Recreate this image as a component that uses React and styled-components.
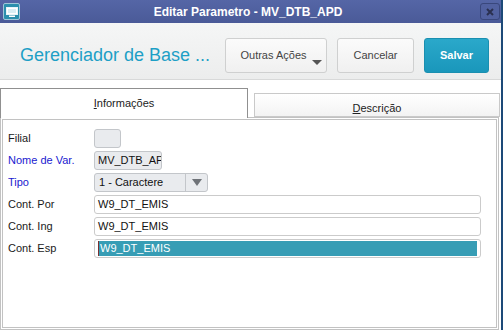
import React from 'react';
import styled, { createGlobalStyle } from 'styled-components';

const GlobalStyle = createGlobalStyle`
  html, body {
    margin: 0;
    padding: 0;
    background: #ffffff;
  }
  body {
    font-family: 'Liberation Sans', Arial, sans-serif;
    font-size: 11px;
  }
`;

const fields = [
  { label: 'Filial', value: '', width: 27, disabled: true },
  { label: 'Nome de Var.', value: 'MV_DTB_APD', width: 68, disabled: true, blue: true },
  { label: 'Tipo', value: '1 - Caractere', width: 114, select: true, blue: true },
  { label: 'Cont. Por', value: 'W9_DT_EMIS', width: 387 },
  { label: 'Cont. Ing', value: 'W9_DT_EMIS', width: 387 },
  { label: 'Cont. Esp', value: 'W9_DT_EMIS', width: 387, selected: true },
];

const App = () => {
  return (
    <>
      <GlobalStyle />
      <Window>
        <TitleBar>
          <AppIcon>
            <svg width="12" height="10" viewBox="0 0 12 10">
              <rect x="0.5" y="0.5" width="11" height="7" fill="#ffffff" stroke="#e8f4f8" />
              <rect x="2" y="2" width="8" height="4" fill="#d9eef4" />
              <rect x="3" y="8.5" width="6" height="1.5" fill="#ffffff" />
            </svg>
          </AppIcon>
          <TitleText>Editar Parametro - MV_DTB_APD</TitleText>
          <CloseButton>
            <svg width="8" height="8" viewBox="0 0 8 8">
              <path d="M1 1 L7 7 M7 1 L1 7" stroke="#2a3050" strokeWidth="2" />
            </svg>
          </CloseButton>
        </TitleBar>

        <Header>
          <PageTitle>Gerenciador de Base ...</PageTitle>
          <Actions>
            <ActionButton width={102}>
              <ButtonLabel shift={-5}>Outras Ações</ButtonLabel>
              <Caret />
            </ActionButton>
            <ActionButton width={77}>
              <ButtonLabel>Cancelar</ButtonLabel>
            </ActionButton>
            <ActionButton width={65} primary>
              <ButtonLabel>Salvar</ButtonLabel>
            </ActionButton>
          </Actions>
        </Header>

        <Body>
          <TabRow>
            <Tab active width={248}>
              <u>I</u>nformações
            </Tab>
            <Tab width={246}>
              <u>D</u>escrição
            </Tab>
          </TabRow>
          <Panel>
            <Form>
              {fields.map(field => (
                <React.Fragment key={field.label}>
                  <Label blue={field.blue}>{field.label}</Label>
                  {field.select ? (
                    <Select width={field.width}>
                      <SelectValue>{field.value}</SelectValue>
                      <SelectArrow />
                    </Select>
                  ) : (
                    <Input width={field.width} disabled={field.disabled}>
                      {field.selected ? (
                        <Selection>{field.value}</Selection>
                      ) : (
                        field.value
                      )}
                    </Input>
                  )}
                </React.Fragment>
              ))}
            </Form>
          </Panel>
        </Body>
      </Window>
    </>
  );
};

const Window = styled.div`
  width: 503px;
  height: 330px;
  box-sizing: border-box;
  border-right: 2px solid #1d4a78;
  display: flex;
  flex-direction: column;
  background: #ffffff;
  overflow: hidden;
`;

const TitleBar = styled.div`
  height: 23px;
  flex-shrink: 0;
  display: flex;
  align-items: center;
  padding: 0 2px 0 3px;
  margin-right: -2px;
  background: linear-gradient(#5566a6, #4a5a98);
`;

const AppIcon = styled.div`
  width: 17px;
  height: 17px;
  box-sizing: border-box;
  border: 1px solid #9fc6d8;
  border-radius: 2px;
  background: #2b8fad;
  display: flex;
  align-items: center;
  justify-content: center;
`;

const TitleText = styled.div`
  flex: 1;
  text-align: center;
  color: #ffffff;
  font-family: 'Liberation Sans', Arial, sans-serif;
  font-weight: bold;
  font-size: 12px;
  margin-left: -4px;
`;

const CloseButton = styled.div`
  width: 20px;
  height: 17px;
  box-sizing: border-box;
  border: 1px solid #39477c;
  border-radius: 3px;
  background: #5161a0;
  display: flex;
  align-items: center;
  justify-content: center;
  margin-right: 1px;
`;

const Header = styled.div`
  height: 57px;
  flex-shrink: 0;
  box-sizing: border-box;
  display: flex;
  align-items: flex-start;
  justify-content: space-between;
  padding: 15px 12px 0 20px;
  background: linear-gradient(#f5f6f6, #eceded);
  border-bottom: 1px solid #d8d9d9;
`;

const PageTitle = styled.div`
  color: #1d9fc6;
  font-size: 18px;
  line-height: 35px;
  font-family: 'Liberation Sans', Arial, sans-serif;
`;

const Actions = styled.div`
  display: flex;
  gap: 10px;
`;

const ActionButton = styled.div`
  position: relative;
  width: ${p => p.width}px;
  height: 35px;
  box-sizing: border-box;
  border-radius: 3px;
  display: flex;
  align-items: center;
  justify-content: center;
  font-size: 11px;
  border: 1px solid ${p => (p.primary ? '#1a8fb0' : '#cfd0d0')};
  background: ${p =>
    p.primary
      ? 'linear-gradient(#2aa8ca, #1a97bb)'
      : 'linear-gradient(#fbfbfb, #f0f0f0)'};
  color: ${p => (p.primary ? '#ffffff' : '#444444')};
  font-weight: ${p => (p.primary ? 'bold' : 'normal')};
`;

const ButtonLabel = styled.span`
  margin-left: ${p => p.shift || 0}px;
  margin-top: -2px;
`;

const Caret = styled.span`
  position: absolute;
  right: 4px;
  bottom: 7px;
  border-left: 5px solid transparent;
  border-right: 5px solid transparent;
  border-top: 5px solid #555555;
`;

const Body = styled.div`
  flex: 1;
  display: flex;
  flex-direction: column;
  padding-top: 8px;
  min-height: 0;
`;

const TabRow = styled.div`
  height: 29px;
  flex-shrink: 0;
  display: flex;
  align-items: flex-end;
  gap: 6px;
`;

const Tab = styled.div`
  width: ${p => p.width}px;
  height: ${p => (p.active ? 30 : 24)}px;
  box-sizing: border-box;
  display: flex;
  align-items: center;
  justify-content: center;
  font-size: 11px;
  color: #222222;
  margin-bottom: ${p => (p.active ? -1 : 0)}px;
  border: 1px solid ${p => (p.active ? '#909090' : '#c9c9c9')};
  border-bottom: ${p => (p.active ? 'none' : '1px solid #c9c9c9')};
  background: ${p =>
    p.active ? '#ffffff' : 'linear-gradient(#ffffff, #f3f3f3)'};
  position: relative;
  z-index: ${p => (p.active ? 1 : 0)};
  padding-top: ${p => (p.active ? 0 : 6)}px;
  padding-bottom: ${p => (p.active ? 1 : 0)}px;
`;

const Panel = styled.div`
  flex: 1;
  margin-right: 2px;
  border: 3px double #c2c2c2;
  background: #ffffff;
  min-height: 0;
`;

const Form = styled.div`
  display: grid;
  grid-template-columns: 86px auto;
  justify-content: start;
  align-items: center;
  row-gap: 3px;
  padding: 9px 0 0 5px;
`;

const Label = styled.div`
  font-size: 11px;
  color: ${p => (p.blue ? '#2020d0' : '#1a1a1a')};
  line-height: 19px;
`;

const Input = styled.div`
  width: ${p => p.width}px;
  height: 19px;
  box-sizing: border-box;
  border: 1px solid ${p => (p.disabled ? '#c3c6ca' : '#cbcbcb')};
  border-radius: 3px;
  background: ${p => (p.disabled ? '#e9ebee' : '#ffffff')};
  padding: 1px 3px;
  font-size: 11px;
  line-height: 15px;
  color: #111111;
  overflow: hidden;
  white-space: nowrap;
  display: flex;
`;

const Selection = styled.div`
  flex: 1;
  background: #379db5;
  color: #ffffff;
  padding-left: 1px;
  border-left: 1px solid #7a3030;
  line-height: 15px;
`;

const Select = styled.div`
  width: ${p => p.width}px;
  height: 19px;
  box-sizing: border-box;
  border: 1px solid #c3c6ca;
  border-radius: 3px;
  background: #e9ebee;
  display: flex;
  font-size: 11px;
  color: #111111;
`;

const SelectValue = styled.div`
  flex: 1;
  padding-left: 4px;
  line-height: 17px;
  border-right: 1px solid #c3c6ca;
`;

const SelectArrow = styled.div`
  width: 21px;
  display: flex;
  align-items: center;
  justify-content: center;

  &::after {
    content: '';
    border-left: 5px solid transparent;
    border-right: 5px solid transparent;
    border-top: 7px solid #6f7378;
  }
`;

export default App;
